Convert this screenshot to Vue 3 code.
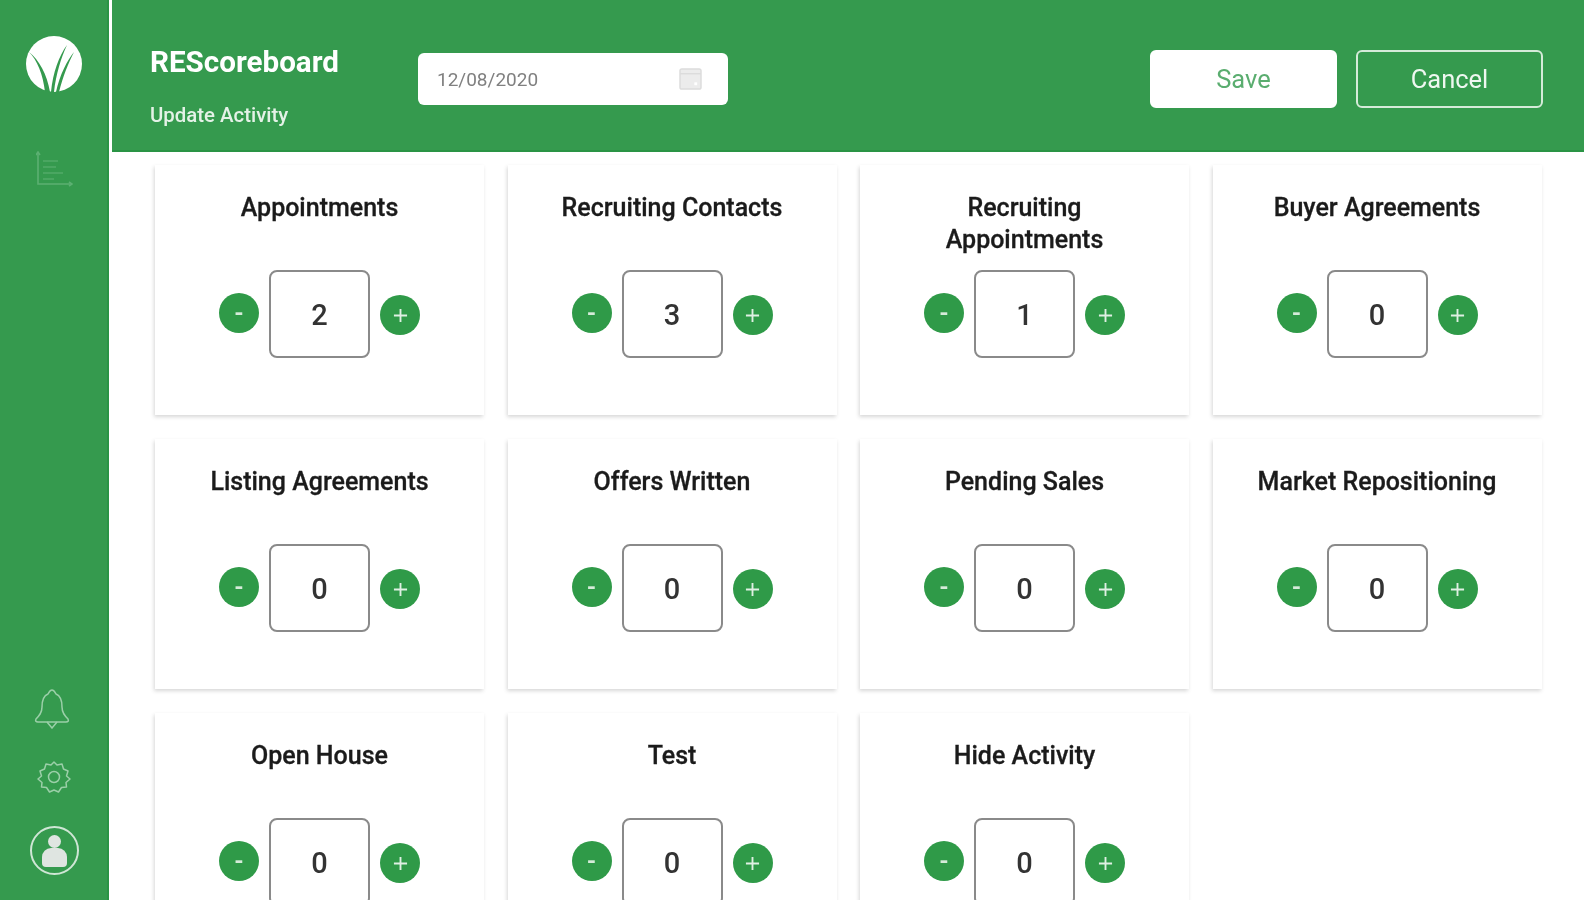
<script setup>
const cards = [
  { title: 'Appointments', value: 2 },
  { title: 'Recruiting Contacts', value: 3 },
  { title: 'Recruiting Appointments', value: 1 },
  { title: 'Buyer Agreements', value: 0 },
  { title: 'Listing Agreements', value: 0 },
  { title: 'Offers Written', value: 0 },
  { title: 'Pending Sales', value: 0 },
  { title: 'Market Repositioning', value: 0 },
  { title: 'Open House', value: 0 },
  { title: 'Test', value: 0 },
  { title: 'Hide Activity', value: 0 },
]
</script>

<template>
  <div class="app">
    <aside class="rail">
      <svg class="logo" viewBox="0 0 56 56" aria-label="RESCoreboard logo">
        <circle cx="28" cy="28" r="28" fill="#fff" />
        <path d="M3 16 C11 24 17 38 19 56 L24 56 C21 38 13 24 3 16 Z" fill="#359a4e" />
        <path d="M41 9 C33 20 27 36 25 56 L28 56 C30 38 35 22 41 9 Z" fill="#359a4e" />
        <path d="M48 16 C41 25 34 38 30 56 L33 56 C37 40 42 28 48 16 Z" fill="#359a4e" />
      </svg>
      <svg class="chart" viewBox="0 0 37 37" fill="none" stroke="#5cb072" stroke-width="1.6">
        <path d="M2 1 V33 H36" />
        <path d="M0 4 L2 1 L4 4 M33 31 L36 33 L33 35" />
        <path d="M7 10 H22 M7 16 H20 M7 22 H27 M7 28 H18" stroke-opacity=".7" />
      </svg>
      <div class="spacer"></div>
      <svg class="bell" viewBox="0 0 36 40" fill="none" stroke="#9bcfa8" stroke-width="1.5">
        <path d="M18 1 C20 1 21 3 22 5 C27 7 28 12 28 18 C28 24 31 27 34 30 C35 32 34 33 32 33 H4 C2 33 1 32 2 30 C5 27 8 24 8 18 C8 12 9 7 14 5 C15 3 16 1 18 1 Z" />
        <path d="M13 33 L18 39 L23 33" />
      </svg>
      <svg class="gear" viewBox="0 0 34 34" fill="none" stroke="#9bcfa8" stroke-width="1.5">
        <path d="M17 2 L20 5 L25 4 L26.500 9 L31 11 L29.500 16 L33 19 L29 22.500 L29.500 27 L24.500 27.500 L21.500 32 L17 30 L12.500 32 L9.500 27.500 L4.500 27 L5 22.500 L1 19 L4.500 16 L3 11 L7.500 9 L9 4 L14 5 Z" stroke-linejoin="round" />
        <circle cx="17" cy="17" r="5.500" />
      </svg>
      <div class="avatar">
        <span class="avatar-head"></span>
        <span class="avatar-body"></span>
      </div>
    </aside>

    <main class="main">
      <header class="topbar">
        <div class="brand">
          <h1>REScoreboard</h1>
          <p>Update Activity</p>
        </div>
        <div class="date">
          <span>12/08/2020</span>
          <svg viewBox="0 0 24 23" fill="#ececec" stroke="#dcdcdc" stroke-width="1.500">
            <rect x="1" y="1" width="22" height="21" rx="2" />
            <path d="M1 6 H23" />
            <rect x="16" y="15" width="3" height="3" fill="#fff" stroke="none" />
          </svg>
        </div>
        <div class="actions">
          <button class="btn save">Save</button>
          <button class="btn cancel">Cancel</button>
        </div>
      </header>

      <section class="grid">
        <article v-for="card in cards" :key="card.title" class="card">
          <h2>{{ card.title }}</h2>
          <div class="stepper">
            <button class="round minus">-</button>
            <div class="value">{{ card.value }}</div>
            <button class="round plus">
              <svg viewBox="0 0 16 16" stroke="#dff0e3" stroke-width="2">
                <path d="M8 1 V15 M1 8 H15" />
              </svg>
            </button>
          </div>
        </article>
      </section>
    </main>
  </div>
</template>

<style>
html, body { margin: 0; height: 100%; overflow: hidden; background: #fff; }
</style>

<style scoped>
.app {
  display: flex;
  width: 1584px;
  height: 900px;
  overflow: hidden;
  font-family: Roboto, "Liberation Sans", sans-serif;
  background: #fff;
  filter: blur(0.7px);
}
.rail {
  box-sizing: border-box;
  flex: 0 0 109px;
  display: flex;
  flex-direction: column;
  align-items: center;
  padding: 36px 0 25px;
  background: #359a4e;
  border-right: 2px solid #2a9445;
}
.logo { width: 56px; height: 56px; margin-left: 1px; }
.chart { width: 37px; height: 37px; margin-top: 59px; margin-left: 1px; }
.spacer { flex: 1; }
.bell { width: 36px; height: 40px; margin-left: -4px; }
.gear { width: 34px; height: 34px; margin-top: 31px; }
.avatar {
  box-sizing: border-box;
  position: relative;
  width: 49px;
  height: 49px;
  margin-top: 32px;
  margin-left: 1px;
  border: 2px solid #cfe6d5;
  border-radius: 50%;
}
.avatar-head {
  position: absolute;
  left: 16px;
  top: 7px;
  width: 13px;
  height: 13px;
  border-radius: 50%;
  background: #dfe5e1;
}
.avatar-body {
  position: absolute;
  left: 10px;
  top: 20px;
  width: 25px;
  height: 19px;
  border-radius: 9px 9px 4px 4px;
  background: #dfe5e1;
}
.main { flex: 1; margin-left: 3px; min-width: 0; }
.topbar {
  box-sizing: border-box;
  display: flex;
  align-items: flex-start;
  height: 152px;
  padding-left: 38px;
  background: #359a4e;
  border-bottom: 2px solid #2a9445;
}
.brand { width: 268px; color: #fff; }
.brand h1 {
  margin: 45px 0 0;
  font-size: 29.6px;
  line-height: 34px;
  font-weight: 700;
}
.brand p {
  margin: 25px 0 0;
  font-size: 20.4px;
  line-height: 22px;
  font-weight: 500;
  color: #e4f2e7;
}
.date {
  box-sizing: border-box;
  display: flex;
  align-items: center;
  justify-content: space-between;
  width: 310px;
  height: 52px;
  margin-top: 53px;
  padding: 0 26px 0 19px;
  background: #fff;
  border-radius: 6px;
  color: #808080;
  font-size: 19px;
}
.date svg { width: 23px; height: 22px; }
.actions {
  display: flex;
  gap: 19px;
  margin-left: auto;
  margin-right: 41px;
  margin-top: 50px;
}
.btn {
  box-sizing: border-box;
  width: 187px;
  height: 58px;
  border-radius: 6px;
  font: 400 25.5px Roboto, "Liberation Sans", sans-serif;
}
.save { background: #fff; border: 2px solid #fff; color: #5aad6f; }
.cancel { background: #359a4e; border: 2px solid #d5ebd9; color: #eef7f0; }
.grid {
  display: grid;
  grid-template-columns: repeat(4, 329px);
  grid-auto-rows: 250px;
  gap: 24px 23.5px;
  padding: 13px 0 0 43px;
}
.card {
  box-sizing: border-box;
  position: relative;
  background: #fff;
  padding-top: 27px;
  text-align: center;
  box-shadow: -1px 2px 4px rgba(0, 0, 0, .16);
}
.card h2 {
  margin: 0 auto;
  max-width: 270px;
  height: 78px;
  font-size: 25px;
  line-height: 32px;
  font-weight: 500;
  color: #1b1b1b;
  -webkit-text-stroke: 0.3px #1b1b1b;
}
.stepper {
  display: grid;
  grid-template-columns: 40px 101px 40px;
  justify-content: center;
  align-items: center;
  gap: 10px;
}
.round {
  box-sizing: border-box;
  display: flex;
  align-items: center;
  justify-content: center;
  width: 40px;
  height: 40px;
  padding: 0;
  border: 0;
  border-radius: 50%;
  background: #2f9a48;
  color: #d5ebd9;
  font: 700 24px Roboto, sans-serif;
}
.minus { transform: translateY(-1px); }
.plus { transform: translateY(1px); }
.plus svg { width: 15px; height: 15px; }
.value {
  box-sizing: border-box;
  display: flex;
  align-items: center;
  justify-content: center;
  height: 88px;
  padding-top: 2px;
  border: 2px solid #8a8a8a;
  border-radius: 8px;
  font-size: 29px;
  font-weight: 500;
  color: #333;
}
</style>
